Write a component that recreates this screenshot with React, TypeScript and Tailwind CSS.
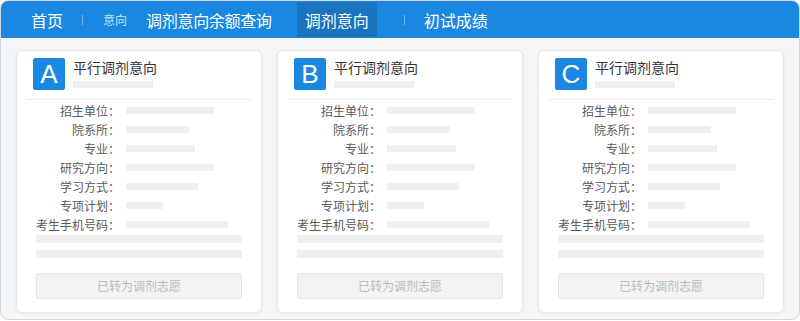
const rows = [
  { label: '招生单位：', w: 88 },
  { label: '院系所：', w: 63 },
  { label: '专业：', w: 69 },
  { label: '研究方向：', w: 88 },
  { label: '学习方式：', w: 72 },
  { label: '专项计划：', w: 37 },
  { label: '考生手机号码：', w: 102 },
]

function IntentCard({ letter }: { letter: string }) {
  return (
    <div className="bg-white rounded-md border border-[#e6e8eb] shadow-[0_1px_3px_rgba(0,0,0,0.06)] pb-[13px]">
      <div className="flex px-4 pt-[7px] pb-[9px]">
        <div className="w-8 h-8 rounded-[2px] bg-[#1a88e1] text-white flex items-center justify-center text-[26px] leading-none font-['Liberation_Sans',sans-serif]">
          {letter}
        </div>
        <div className="ml-2">
          <div className="text-[14px] leading-[18px] text-[#333]">平行调剂意向</div>
          <div className="w-20 h-[7px] bg-[#eef0f2] mt-[5px]" />
        </div>
      </div>
      <div className="mx-[9px] h-px bg-[#eceef0]" />
      <div className="px-[19px] pt-px">
        {rows.map((r) => (
          <div key={r.label} className="flex items-center h-[19px]">
            <span className="w-[84px] text-right text-[12px] leading-none text-[#5a5a5a]">{r.label}</span>
            <div className="ml-[6px] h-[7px] bg-[#eef0f2]" style={{ width: r.w }} />
          </div>
        ))}
        <div className="mt-px h-2 bg-[#eef0f2]" />
        <div className="mt-[7px] h-2 bg-[#eef0f2]" />
        <div className="mt-[15px] h-[26px] rounded-[2px] bg-[#f2f3f5] border border-[#e2e4e7] flex items-center justify-center text-[12px] text-[#b9bcc0]">
          已转为调剂志愿
        </div>
      </div>
    </div>
  )
}

export default function App() {
  return (
    <div className="w-[800px] h-[321px] bg-white font-['Noto_Sans_CJK_SC',sans-serif]">
      <div className="h-[320px] rounded-lg border border-[#d5d8dc] bg-[#f5f6f8] overflow-hidden">
        <div className="h-[37px] bg-[#1a88e1] flex items-center text-white text-[16px]">
          <span className="ml-[30px]">首页</span>
          <span className="ml-[19px] w-px h-[10px] bg-white/40" />
          <span className="ml-[20px] text-[12px] text-white/75">意向</span>
          <span className="ml-[19px] tracking-[-0.3px]">调剂意向余额查询</span>
          <span className="ml-[25px] h-[35px] px-2 flex items-center bg-[#1a74c0]">调剂意向</span>
          <span className="ml-[27px] w-px h-[10px] bg-white/40" />
          <span className="ml-[19px]">初试成绩</span>
        </div>
        <div className="grid grid-cols-3 gap-[15px] px-[15px] pt-3">
          <IntentCard letter="A" />
          <IntentCard letter="B" />
          <IntentCard letter="C" />
        </div>
      </div>
    </div>
  )
}
